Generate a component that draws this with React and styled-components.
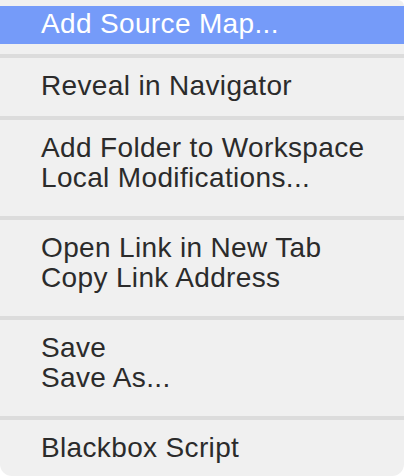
import React from "react";
import styled, { createGlobalStyle } from "styled-components";

const GlobalStyle = createGlobalStyle`
  html, body {
    margin: 0;
    padding: 0;
    background: #ffffff;
  }
  body {
    font-family: "Liberation Sans", Arial, sans-serif;
  }
`;

const Menu = styled.div`
  box-sizing: border-box;
  width: 404px;
  height: 476px;
  padding-top: 6px;
  background: #f0f0f0;
  border-radius: 0 6px 12px 12px;
  overflow: hidden;
`;

const Group = styled.div`
  padding-top: ${(p) => (p.$first ? "0" : "13px")};
  padding-bottom: ${(p) => p.$tail}px;
`;

const Item = styled.div`
  padding: ${(p) => (p.$active ? "3px 0 5px 41px" : "0 0 0 41px")};
  font-size: 28px;
  line-height: 30px;
  letter-spacing: 0.35px;
  color: ${(p) => (p.$active ? "#ffffff" : "#2b2b2b")};
  background: ${(p) => (p.$active ? "#759bf9" : "transparent")};
  white-space: nowrap;
  cursor: default;
`;

const Separator = styled.div`
  height: 4px;
  background: #dcdcdc;
`;

const groups = [
  { items: ["Add Source Map..."], tail: 10, first: true, active: 0 },
  { items: ["Reveal in Navigator"], tail: 15 },
  { items: ["Add Folder to Workspace", "Local Modifications..."], tail: 23 },
  { items: ["Open Link in New Tab", "Copy Link Address"], tail: 23 },
  { items: ["Save", "Save As..."], tail: 23 },
  { items: ["Blackbox Script"], tail: 13 },
];

export default function App() {
  return (
    <>
      <GlobalStyle />
      <Menu>
        {groups.map((g, gi) => (
          <React.Fragment key={gi}>
            {gi > 0 && <Separator />}
            <Group $first={g.first} $tail={g.tail}>
              {g.items.map((label, i) => (
                <Item key={label} $active={g.active === i}>
                  {label}
                </Item>
              ))}
            </Group>
          </React.Fragment>
        ))}
      </Menu>
    </>
  );
}
